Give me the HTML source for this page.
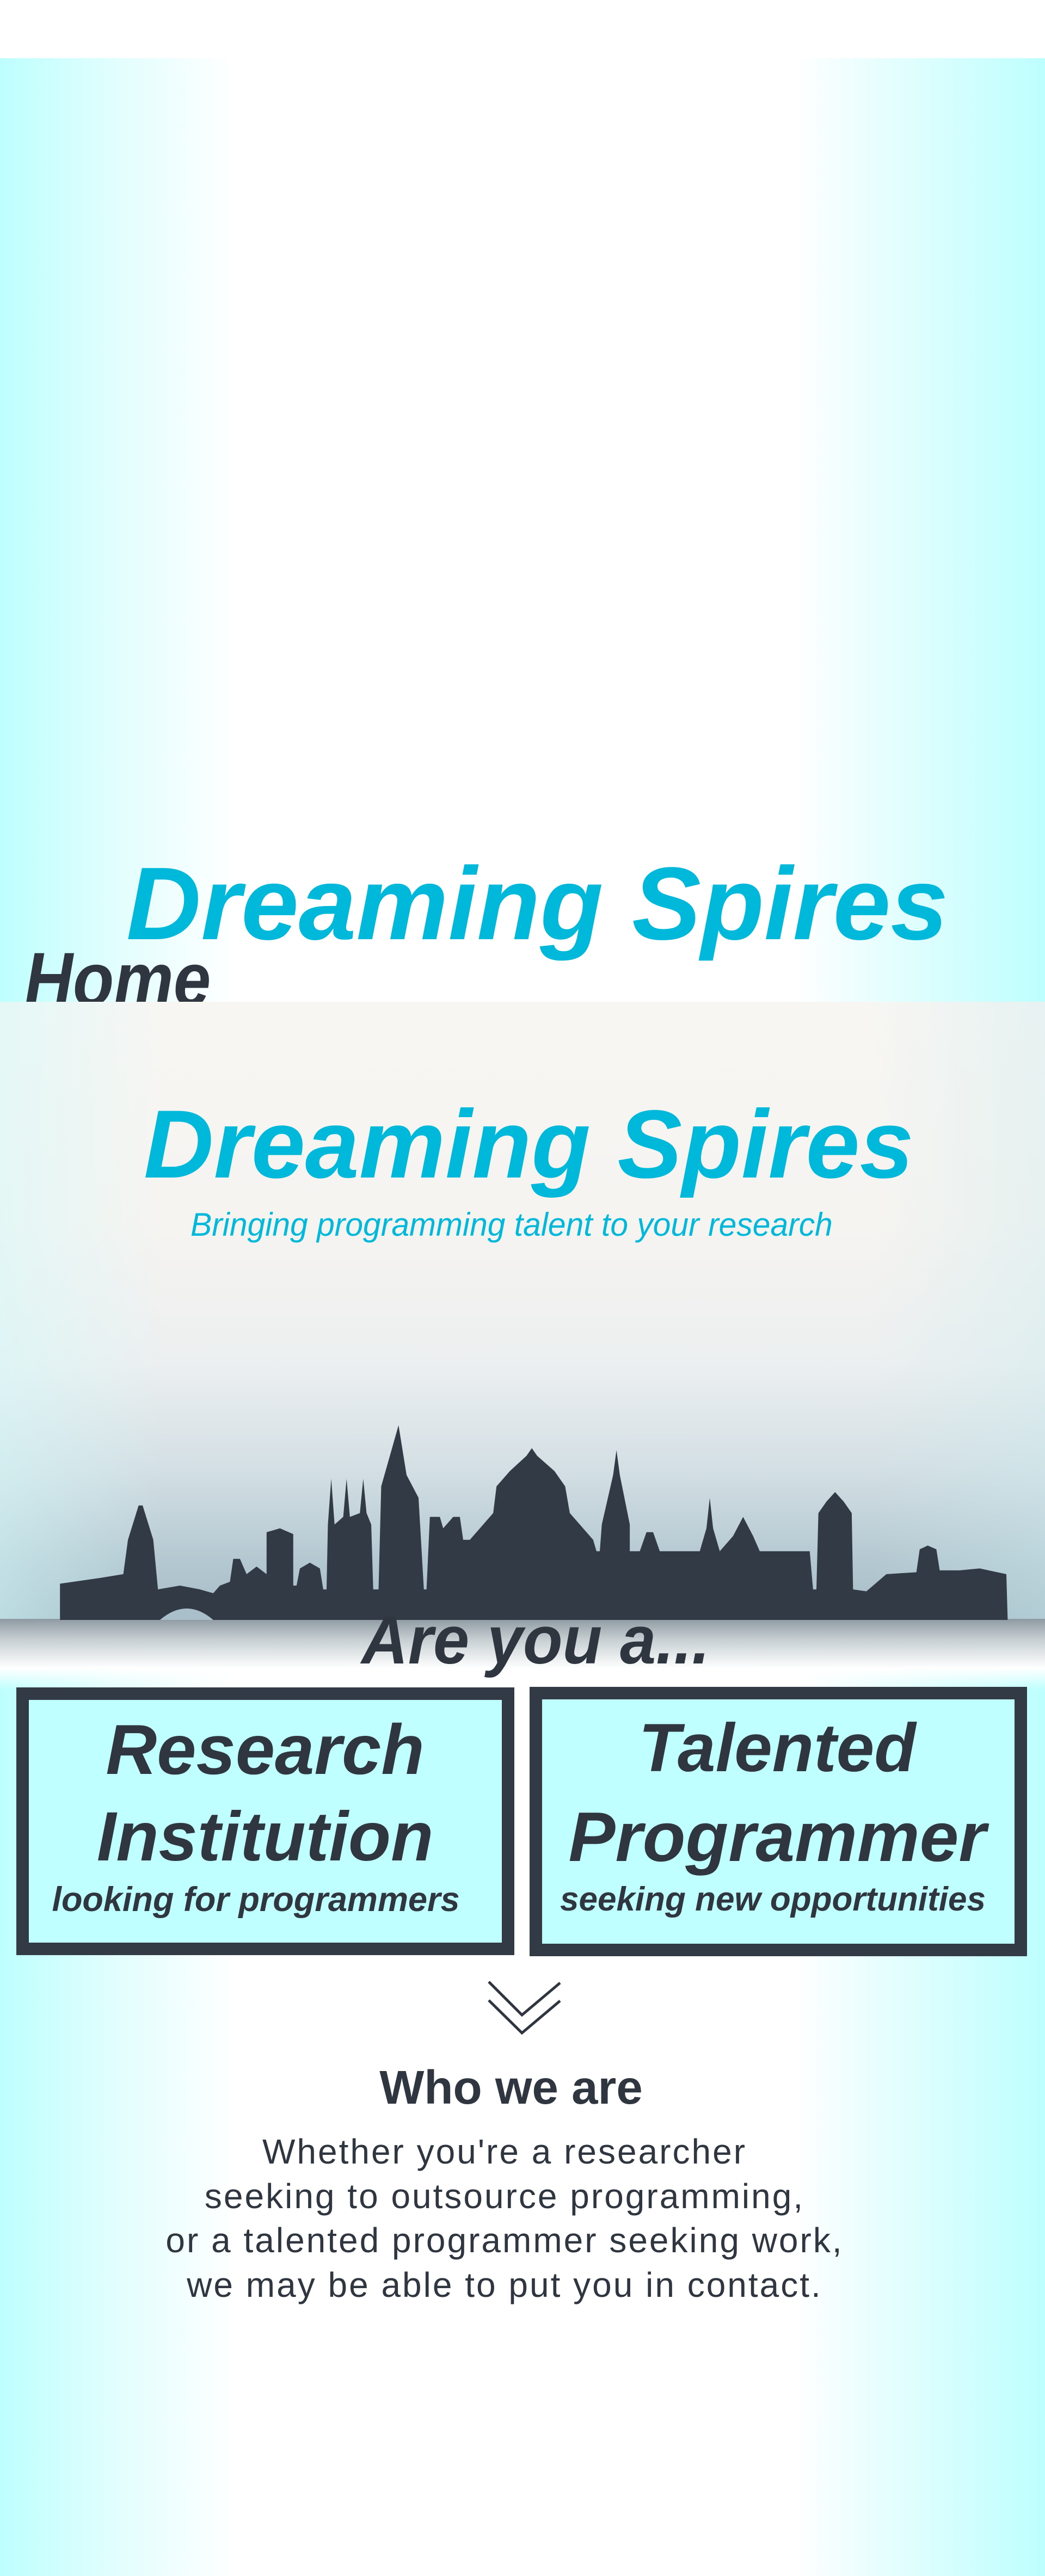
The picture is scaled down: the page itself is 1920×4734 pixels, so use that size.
<!DOCTYPE html>
<html><head><meta charset="utf-8">
<style>
html,body{margin:0;padding:0}
body{width:1920px;height:4734px;position:relative;overflow:hidden;background:#fff;font-family:"Liberation Sans",sans-serif}
.bg{position:absolute;left:0;width:1920px;background:linear-gradient(to right,#bdfffe 0,#e0fefe 200px,#fff 430px,#fff 1460px,#eafefe 1600px,#bdfffe 1920px)}
.t{position:absolute;white-space:nowrap;line-height:1;font-style:italic;font-weight:bold}
.c{transform:translateX(-50%)}
.box{position:absolute;box-sizing:border-box;border:23px solid #323a46;background:#bfffff}
</style></head><body>
<div class="bg" style="top:107px;height:1734px"></div>
<div class="bg" style="top:2990px;height:1744px"></div>

<div class="t" style="left:232px;top:1566px;font-size:190px;color:#00b8da">Dreaming Spires</div>
<div class="t" style="left:45px;top:1730px;font-size:140px;color:#2f3640;transform:scaleX(0.88);transform-origin:left">Home</div>

<!-- hero image -->
<div style="position:absolute;left:0;top:1841px;width:1920px;height:1149px;background:linear-gradient(to bottom,#f7f6f3 0,#f6f4f1 35%,#eceff0 58%,#d3dfe4 75%,#b3c7d0 90%,#a4bbc6 100%)"></div>
<div style="position:absolute;left:0;top:1841px;width:1920px;height:1149px;background:linear-gradient(to right,rgba(210,250,250,0.5) 0,rgba(255,255,255,0) 300px,rgba(255,255,255,0) 1600px,rgba(200,235,238,0.35) 1920px)"></div>
<div class="t" style="left:264px;top:2014px;font-size:178px;color:#00b8da">Dreaming Spires</div>
<div class="t" style="left:350px;top:2221px;font-size:60px;font-weight:normal;color:#00b8da;transform:scaleX(0.98);transform-origin:left">Bringing programming talent to your research</div>

<div style="position:absolute;left:0;top:2975px;width:1920px;height:130px;background:linear-gradient(to bottom,#8e9aa2 0,#c8d0d3 30%,#fff 70%,rgba(255,255,255,0) 100%)"></div>
<svg style="position:absolute;left:0;top:2500px" width="1920" height="1100" viewBox="0 0 1568 1568" preserveAspectRatio="none">
<path fill="#323a46" d="M90 680 L90 585 L150 570 L185 560 L192 470 L208 380 L214 380 L230 470 L237 600 L270 590 L300 600 L320 610 L330 590 L345 580 L350 520 L360 520 L370 560 L385 540 L400 560 L400 450 L420 440 L440 455 L440 590 L445 590 L450 545 L465 530 L480 545 L485 600 L490 600 L492 430 L497 310 L502 430 L515 410 L520 310 L525 410 L540 400 L545 310 L550 400 L557 430 L560 600 L568 600 L572 330 L598 170 L610 300 L628 360 L636 600 L640 600 L645 410 L660 410 L665 440 L680 410 L690 410 L695 470 L705 470 L740 400 L745 330 L765 290 L790 250 L798 230 L806 250 L832 290 L848 330 L855 400 L890 470 L895 500 L900 500 L903 430 L920 300 L925 235 L930 300 L945 430 L945 500 L960 500 L970 450 L980 450 L990 500 L1050 500 L1060 440 L1065 360 L1070 440 L1080 500 L1100 460 L1115 410 L1130 460 L1140 500 L1215 500 L1220 600 L1225 600 L1228 400 L1240 370 L1253 345 L1266 370 L1278 400 L1280 600 L1300 605 L1330 560 L1375 555 L1380 495 L1392 485 L1405 495 L1410 550 L1440 550 L1470 545 L1510 560 L1512 680 Z"/>
<path fill="#a9bfca" d="M240 680 Q280 620 320 680 Z"/>
</svg>

<div class="t" style="left:664px;top:2952px;font-size:125px;color:#2f3640;transform:scaleX(0.95);transform-origin:left">Are you a...</div>

<div class="box" style="left:30px;top:3101px;width:915px;height:492px"></div>
<div class="box" style="left:973px;top:3100px;width:914px;height:495px"></div>
<div class="t c" style="left:487px;top:3150px;font-size:130px;color:#2f3640">Research</div>
<div class="t c" style="left:487px;top:3312px;font-size:128px;color:#2f3640">Institution</div>
<div class="t c" style="left:470px;top:3460px;font-size:63px;color:#2f3640">looking for programmers</div>
<div class="t c" style="left:1420px;top:3460px;font-size:62px;color:#2f3640">seeking new opportunities</div>
<div class="t c" style="left:1428px;top:3150px;font-size:125px;color:#2f3640">Talented</div>
<div class="t c" style="left:1428px;top:3312px;font-size:129px;color:#2f3640">Programmer</div>

<svg style="position:absolute;left:0;top:0" width="1920" height="4734">
<polyline points="898,3642 959,3703 1029,3644" fill="none" stroke="#2f3640" stroke-width="5"/>
<polyline points="898,3676 959,3736 1029,3677" fill="none" stroke="#2f3640" stroke-width="5"/>
</svg>

<div class="t c" style="left:939px;top:3793px;font-size:87px;font-style:normal;color:#2f3640">Who we are</div>
<div class="t c" style="left:927px;top:3922px;font-size:64px;font-style:normal;font-weight:normal;letter-spacing:3px;color:#2f3640">Whether you're a researcher</div>
<div class="t c" style="left:927px;top:4004px;font-size:64px;font-style:normal;font-weight:normal;letter-spacing:3px;color:#2f3640">seeking to outsource programming,</div>
<div class="t c" style="left:927px;top:4085px;font-size:64px;font-style:normal;font-weight:normal;letter-spacing:3px;color:#2f3640">or a talented programmer seeking work,</div>
<div class="t c" style="left:927px;top:4167px;font-size:64px;font-style:normal;font-weight:normal;letter-spacing:3px;color:#2f3640">we may be able to put you in contact.</div>
</body></html>
